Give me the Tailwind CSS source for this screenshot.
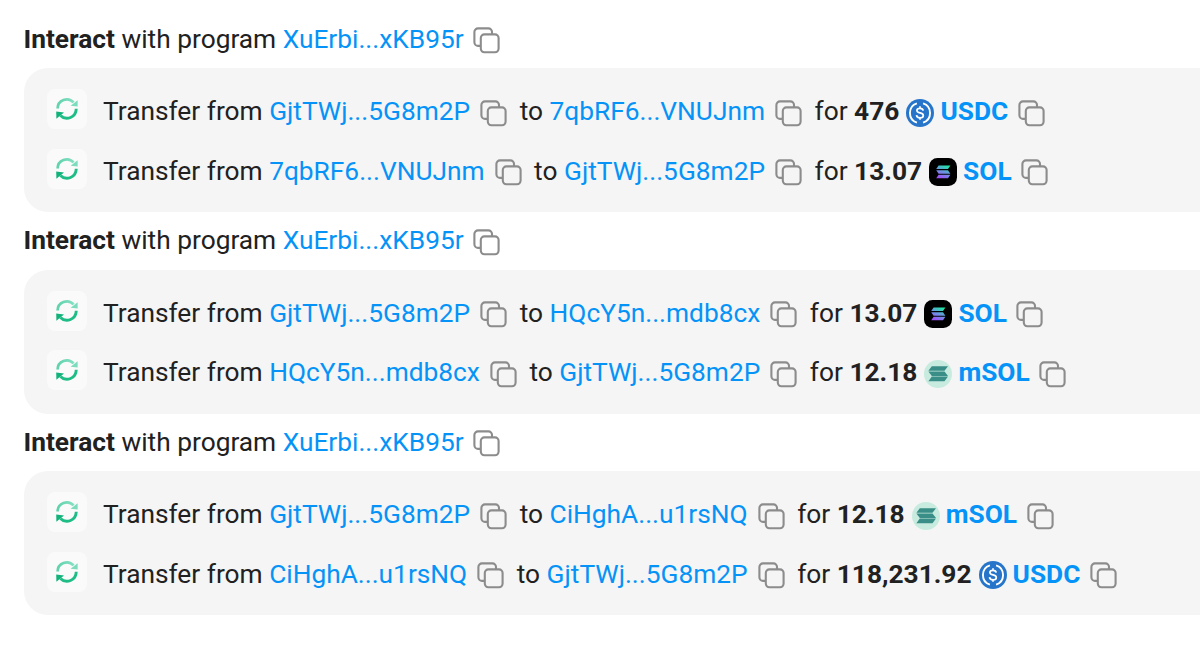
<!DOCTYPE html>
<html lang="en">

<head>
    <meta charset="UTF-8">
    <meta name="viewport" content="width=device-width, initial-scale=1.0">
    <title>Transaction actions</title>
    <script src="https://cdn.jsdelivr.net/npm/@tailwindcss/browser@4"></script>
</head>

<body class="h-[646px] overflow-hidden bg-white font-['Roboto',sans-serif] text-[26.3px] text-[#212121]">
    <!-- Icon definitions -->
    <svg class="absolute size-0" aria-hidden="true">
        <defs>
            <linearGradient id="swapTop" x1="0" y1="0" x2="1" y2="0">
                <stop offset="0" stop-color="#5fd3ac" />
                <stop offset="1" stop-color="#86dfc3" />
            </linearGradient>
            <linearGradient id="solana" gradientUnits="userSpaceOnUse" x1="11" y1="20.5" x2="17" y2="7.5">
                <stop offset="0" stop-color="#a04df8" />
                <stop offset="0.5" stop-color="#6f8fe4" />
                <stop offset="1" stop-color="#1fe5a4" />
            </linearGradient>
        </defs>
        <symbol id="copy" viewBox="0 0 27 27">
            <g fill="none" stroke="#8c8c8c" stroke-width="2.1">
                <path d="M7.6 18.9H5a3.6 3.6 0 0 1-3.6-3.6V5a3.6 3.6 0 0 1 3.6-3.6H15.4a3.6 3.6 0 0 1 3.6 3.6V7.4" />
                <rect x="7.8" y="7.4" width="17.8" height="17.8" rx="3.6" />
            </g>
        </symbol>
        <symbol id="swap" viewBox="0 0 24 24">
            <path d="M2.6 11.6A9.2 9.2 0 0 1 18.6 5.4" fill="none" stroke="url(#swapTop)" stroke-width="2.7" />
            <path d="M22.6 3.2V9.6L15.6 8.8Z" fill="#7cdcbd" />
            <path d="M21.2 11.8A9.2 9.2 0 0 1 5.4 18.4" fill="none" stroke="#1fbd86" stroke-width="2.9" />
            <path d="M1.4 21.8L1.2 14.4L9 15.6Z" fill="#12b37b" />
        </symbol>
        <symbol id="usdc" viewBox="0 0 28 28">
            <circle cx="14" cy="14" r="14" fill="#2775ca" />
            <g fill="none" stroke="#fff">
                <path d="M10.9 4.4a10.1 10.1 0 0 0 0 19.2M17.1 4.4a10.1 10.1 0 0 1 0 19.2" stroke-width="1.9" />
                <path d="M17.2 11.6c-.2-1.6-1.4-2.3-3.2-2.3s-3.1.8-3.1 2.2c0 3.3 6.4 1.5 6.4 4.9 0 1.5-1.3 2.4-3.3 2.4s-3.3-.9-3.5-2.6M14 7.3v2M14 18.8v2" stroke-width="1.7" />
            </g>
        </symbol>
        <symbol id="sol" viewBox="0 0 28 28">
            <rect width="28" height="28" rx="8.5" fill="#000" />
            <path d="M9.6 7.6H21.4l-2.4 3.5H7.2ZM7.2 12.2h11.8l2.4 3.5H9.6ZM9.6 16.8H21.4l-2.4 3.5H7.2Z" fill="url(#solana)" />
        </symbol>
        <symbol id="msol" viewBox="0 0 28 28">
            <circle cx="14" cy="14" r="14" fill="#c8ebdf" />
            <path d="M7.8 6.2H24l-3.5 4.6H4.4ZM4.4 11.4h16.1l3.5 4.6H7.8ZM7.8 16.6H24l-3.5 4.6H4.4Z" fill="#398e87" />
        </symbol>
    </svg>

    <main class="flex flex-col pt-[10.5px] pl-[23.5px]">
        <section>
            <h2 class="flex h-[57.5px] items-center whitespace-nowrap"><b>Interact</b>&nbsp;with program&nbsp;<a class="text-[#0693f7]">XuErbi...xKB95r</a><svg class="mt-[3px] ml-[9.5px] size-[27px]"><use href="#copy" /></svg></h2>
            <div class="flex h-36 flex-col gap-[19.5px] rounded-l-3xl bg-[#f5f5f5] pt-[21px] pl-[23.5px]">
                <div class="flex h-10 items-center whitespace-nowrap">
                    <span class="mr-4 flex size-10 items-center justify-center rounded-lg bg-[#fafafa]"><svg class="size-6"><use href="#swap" /></svg></span>
                    <p class="flex items-center pt-1.5">Transfer from&nbsp;<a class="text-[#0693f7]">GjtTWj...5G8m2P</a><svg class="mt-0.5 mr-1.5 ml-2.5 size-[27px]"><use href="#copy" /></svg>&nbsp;to&nbsp;<a class="text-[#0693f7]">7qbRF6...VNUJnm</a><svg class="mt-0.5 mr-1.5 ml-2.5 size-[27px]"><use href="#copy" /></svg>&nbsp;for&nbsp;<b>476</b><svg class="mr-1.5 ml-[7px] mt-px size-7"><use href="#usdc" /></svg><a class="font-bold text-[#0693f7]">USDC</a><svg class="mt-0.5 ml-[9.5px] size-[27px]"><use href="#copy" /></svg></p>
                </div>
                <div class="flex h-10 items-center whitespace-nowrap">
                    <span class="mr-4 flex size-10 items-center justify-center rounded-lg bg-[#fafafa]"><svg class="size-6"><use href="#swap" /></svg></span>
                    <p class="flex items-center pt-1.5">Transfer from&nbsp;<a class="text-[#0693f7]">7qbRF6...VNUJnm</a><svg class="mt-0.5 mr-1.5 ml-2.5 size-[27px]"><use href="#copy" /></svg>&nbsp;to&nbsp;<a class="text-[#0693f7]">GjtTWj...5G8m2P</a><svg class="mt-0.5 mr-1.5 ml-2.5 size-[27px]"><use href="#copy" /></svg>&nbsp;for&nbsp;<b>13.07</b><svg class="mr-1.5 ml-[7px] mt-px size-7"><use href="#sol" /></svg><a class="font-bold text-[#0693f7]">SOL</a><svg class="mt-0.5 ml-[9.5px] size-[27px]"><use href="#copy" /></svg></p>
                </div>
            </div>
        </section>

        <section>
            <h2 class="flex h-[57.5px] items-center whitespace-nowrap"><b>Interact</b>&nbsp;with program&nbsp;<a class="text-[#0693f7]">XuErbi...xKB95r</a><svg class="mt-[3px] ml-[9.5px] size-[27px]"><use href="#copy" /></svg></h2>
            <div class="flex h-36 flex-col gap-[19.5px] rounded-l-3xl bg-[#f5f5f5] pt-[21px] pl-[23.5px]">
                <div class="flex h-10 items-center whitespace-nowrap">
                    <span class="mr-4 flex size-10 items-center justify-center rounded-lg bg-[#fafafa]"><svg class="size-6"><use href="#swap" /></svg></span>
                    <p class="flex items-center pt-1.5">Transfer from&nbsp;<a class="text-[#0693f7]">GjtTWj...5G8m2P</a><svg class="mt-0.5 mr-1.5 ml-2.5 size-[27px]"><use href="#copy" /></svg>&nbsp;to&nbsp;<a class="text-[#0693f7]">HQcY5n...mdb8cx</a><svg class="mt-0.5 mr-1.5 ml-2.5 size-[27px]"><use href="#copy" /></svg>&nbsp;for&nbsp;<b>13.07</b><svg class="mr-1.5 ml-[7px] mt-px size-7"><use href="#sol" /></svg><a class="font-bold text-[#0693f7]">SOL</a><svg class="mt-0.5 ml-[9.5px] size-[27px]"><use href="#copy" /></svg></p>
                </div>
                <div class="flex h-10 items-center whitespace-nowrap">
                    <span class="mr-4 flex size-10 items-center justify-center rounded-lg bg-[#fafafa]"><svg class="size-6"><use href="#swap" /></svg></span>
                    <p class="flex items-center pt-1.5">Transfer from&nbsp;<a class="text-[#0693f7]">HQcY5n...mdb8cx</a><svg class="mt-0.5 mr-1.5 ml-2.5 size-[27px]"><use href="#copy" /></svg>&nbsp;to&nbsp;<a class="text-[#0693f7]">GjtTWj...5G8m2P</a><svg class="mt-0.5 mr-1.5 ml-2.5 size-[27px]"><use href="#copy" /></svg>&nbsp;for&nbsp;<b>12.18</b><svg class="mr-1.5 ml-[7px] mt-px size-7"><use href="#msol" /></svg><a class="font-bold text-[#0693f7]">mSOL</a><svg class="mt-0.5 ml-[9.5px] size-[27px]"><use href="#copy" /></svg></p>
                </div>
            </div>
        </section>

        <section>
            <h2 class="flex h-[57.5px] items-center whitespace-nowrap"><b>Interact</b>&nbsp;with program&nbsp;<a class="text-[#0693f7]">XuErbi...xKB95r</a><svg class="mt-[3px] ml-[9.5px] size-[27px]"><use href="#copy" /></svg></h2>
            <div class="flex h-36 flex-col gap-[19.5px] rounded-l-3xl bg-[#f5f5f5] pt-[21px] pl-[23.5px]">
                <div class="flex h-10 items-center whitespace-nowrap">
                    <span class="mr-4 flex size-10 items-center justify-center rounded-lg bg-[#fafafa]"><svg class="size-6"><use href="#swap" /></svg></span>
                    <p class="flex items-center pt-1.5">Transfer from&nbsp;<a class="text-[#0693f7]">GjtTWj...5G8m2P</a><svg class="mt-0.5 mr-1.5 ml-2.5 size-[27px]"><use href="#copy" /></svg>&nbsp;to&nbsp;<a class="text-[#0693f7]">CiHghA...u1rsNQ</a><svg class="mt-0.5 mr-1.5 ml-2.5 size-[27px]"><use href="#copy" /></svg>&nbsp;for&nbsp;<b>12.18</b><svg class="mr-1.5 ml-[7px] mt-px size-7"><use href="#msol" /></svg><a class="font-bold text-[#0693f7]">mSOL</a><svg class="mt-0.5 ml-[9.5px] size-[27px]"><use href="#copy" /></svg></p>
                </div>
                <div class="flex h-10 items-center whitespace-nowrap">
                    <span class="mr-4 flex size-10 items-center justify-center rounded-lg bg-[#fafafa]"><svg class="size-6"><use href="#swap" /></svg></span>
                    <p class="flex items-center pt-1.5">Transfer from&nbsp;<a class="text-[#0693f7]">CiHghA...u1rsNQ</a><svg class="mt-0.5 mr-1.5 ml-2.5 size-[27px]"><use href="#copy" /></svg>&nbsp;to&nbsp;<a class="text-[#0693f7]">GjtTWj...5G8m2P</a><svg class="mt-0.5 mr-1.5 ml-2.5 size-[27px]"><use href="#copy" /></svg>&nbsp;for&nbsp;<b>118,231.92</b><svg class="mr-1.5 ml-[7px] mt-px size-7"><use href="#usdc" /></svg><a class="font-bold text-[#0693f7]">USDC</a><svg class="mt-0.5 ml-[9.5px] size-[27px]"><use href="#copy" /></svg></p>
                </div>
            </div>
        </section>
    </main>
</body>

</html>
